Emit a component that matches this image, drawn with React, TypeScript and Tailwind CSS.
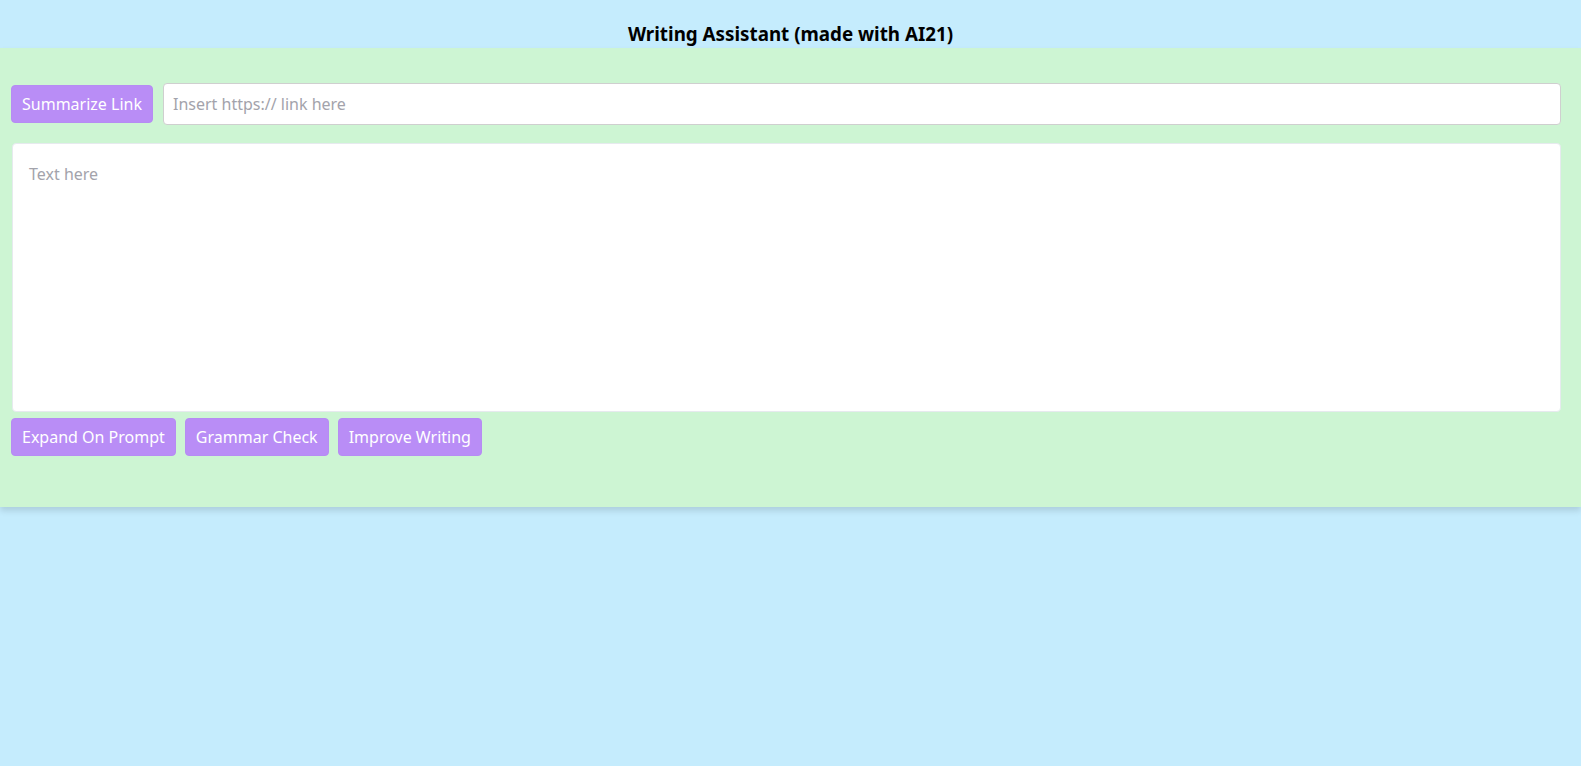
import React from 'react';

const font = { fontFamily: '"Noto Sans", "Open Sans", sans-serif' };

const ActionButton = ({ children }: { children: React.ReactNode }) => (
	<button className="h-[38px] px-[10px] rounded bg-[#b98df6] text-white text-base border border-[#b68cf3] cursor-pointer whitespace-nowrap">
		{children}
	</button>
);

export default function App() {
	return (
		<div className="min-h-[766px] bg-[#c5ecfd] text-black" style={font}>
			<header className="h-[48px] flex items-end justify-center pb-[4px]">
				<h1 className="text-[18.8px] font-bold leading-none">Writing Assistant (made with AI21)</h1>
			</header>
			<main className="bg-[#cdf5d3] pl-[11px] pr-[20px] pt-[35px] pb-[51px] shadow-[0_4px_6px_rgba(0,0,0,0.12)]">
				<div className="flex items-center gap-[10px]">
					<ActionButton>Summarize Link</ActionButton>
					<input
						className="flex-1 h-[42px] px-[9px] bg-white border border-[#cfcfcf] rounded text-base outline-none placeholder:text-[#a3a3ab]"
						placeholder="Insert https:// link here"
					/>
				</div>
				<textarea
					className="block w-[calc(100%-1px)] ml-[1px] mt-[18px] h-[269px] px-[16px] pt-[18px] bg-white border border-[#e6eaee] rounded text-base outline-none resize-none placeholder:text-[#a3a3ab]"
					placeholder="Text here"
				/>
				<div className="flex gap-[9px] mt-[6px]">
					<ActionButton>Expand On Prompt</ActionButton>
					<ActionButton>Grammar Check</ActionButton>
					<ActionButton>Improve Writing</ActionButton>
				</div>
			</main>
		</div>
	);
}
